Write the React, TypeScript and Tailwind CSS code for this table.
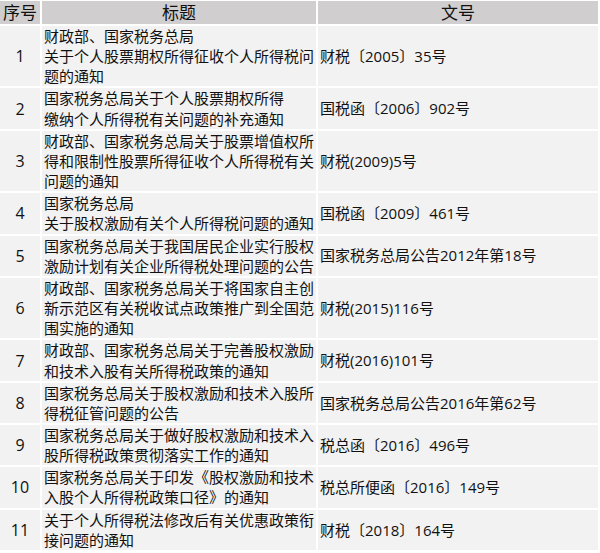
import React from "react";

const rows: { n: string; t: string[]; d: string }[] = [
  { n: "1", t: ["财政部、国家税务总局", "关于个人股票期权所得征收个人所得税问", "题的通知"], d: "财税〔2005〕35号" },
  { n: "2", t: ["国家税务总局关于个人股票期权所得", "缴纳个人所得税有关问题的补充通知"], d: "国税函〔2006〕902号" },
  { n: "3", t: ["财政部、国家税务总局关于股票增值权所", "得和限制性股票所得征收个人所得税有关", "问题的通知"], d: "财税(2009)5号" },
  { n: "4", t: ["国家税务总局", "关于股权激励有关个人所得税问题的通知"], d: "国税函〔2009〕461号" },
  { n: "5", t: ["国家税务总局关于我国居民企业实行股权", "激励计划有关企业所得税处理问题的公告"], d: "国家税务总局公告2012年第18号" },
  { n: "6", t: ["财政部、国家税务总局关于将国家自主创", "新示范区有关税收试点政策推广到全国范", "围实施的通知"], d: "财税(2015)116号" },
  { n: "7", t: ["财政部、国家税务总局关于完善股权激励", "和技术入股有关所得税政策的通知"], d: "财税(2016)101号" },
  { n: "8", t: ["国家税务总局关于股权激励和技术入股所", "得税征管问题的公告"], d: "国家税务总局公告2016年第62号" },
  { n: "9", t: ["国家税务总局关于做好股权激励和技术入", "股所得税政策贯彻落实工作的通知"], d: "税总函〔2016〕496号" },
  { n: "10", t: ["国家税务总局关于印发《股权激励和技术", "入股个人所得税政策口径》的通知"], d: "税总所便函〔2016〕149号" },
  { n: "11", t: ["关于个人所得税法修改后有关优惠政策衔", "接问题的通知"], d: "财税〔2018〕164号" },
];

export default function App() {
  return (
    <div
      className="w-[600px] h-[553px] bg-white pt-[1px] text-[#111111]"
      style={{ fontFamily: '"Open Sans", "Noto Sans CJK SC", sans-serif' }}
    >
      <div className="grid grid-cols-[40px_274px_280px] gap-[2px]">
        <div className="h-[23px] bg-[#d0cece] flex items-center justify-center text-[17px] leading-none whitespace-nowrap">序号</div>
        <div className="h-[23px] bg-[#d0cece] flex items-center justify-center text-[17px] leading-none">标题</div>
        <div className="h-[23px] bg-[#d0cece] flex items-center justify-center text-[17px] leading-none">文号</div>
        {rows.map((r) => (
          <React.Fragment key={r.n}>
            <div className="bg-[#f2f2f2] flex items-center justify-center text-[16px]">{r.n}</div>
            <div className="bg-[#f2f2f2] pl-[2px] text-[15px] leading-[20.16px] flex flex-col">
              {r.t.map((l, i) => (
                <span key={i} className="whitespace-nowrap">{l}</span>
              ))}
            </div>
            <div className="bg-[#f2f2f2] pl-[2px] flex items-center text-[15px] whitespace-nowrap">{r.d}</div>
          </React.Fragment>
        ))}
      </div>
    </div>
  );
}
